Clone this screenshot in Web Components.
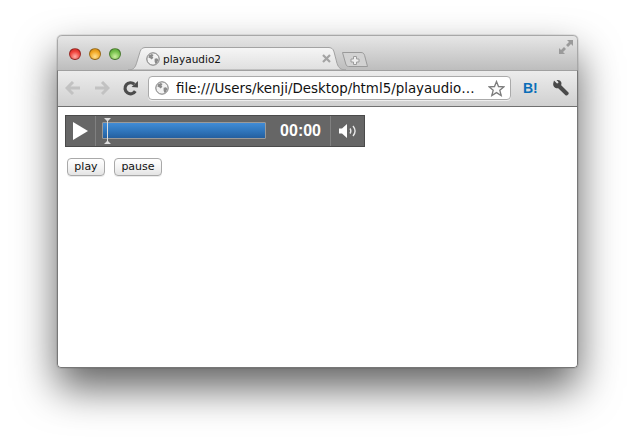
<!DOCTYPE html>
<html>
<head>
<meta charset="utf-8">
<title>playaudio2</title>
<style>
  html { background: #fff; }
  body { margin: 0; padding: 35px 57px 0; width: 635px; height: 447px; box-sizing: border-box; overflow: hidden; font-family: "DejaVu Sans", sans-serif; }
</style>
</head>
<body>
<browser-window>
  <tab-strip slot="tabs">
    <browser-tab>playaudio2</browser-tab>
  </tab-strip>
  <nav-toolbar slot="toolbar" url="file:///Users/kenji/Desktop/html5/playaudio…"></nav-toolbar>
  <audio-bar time="00:00"></audio-bar>
  <div style="display:flex;gap:9px;padding:11px 0 0 2px">
    <mac-button style="width:38px">play</mac-button>
    <mac-button style="width:48px">pause</mac-button>
  </div>
</browser-window>

<script>
const GLOBE = `
  <svg width="14" height="14" viewBox="0 0 14 14">
    <circle cx="7" cy="7" r="6.2" fill="#f2f2f2" stroke="#777" stroke-width="1"/>
    <path d="M3 3.2 5.8 2 7.6 3 6.400 4.600 7.400 5.800 5.600 7.600 4.600 6.600 2.400 5.600ZM8.600 6.800 11 6.200 12.400 7.800 11 11 9.400 12 8.600 9.600Z" fill="#8a8a8a"/>
  </svg>`;

class BrowserWindow extends HTMLElement {
  constructor() {
    super();
    const shadowRoot = this.attachShadow({ mode: "open" });
    shadowRoot.innerHTML = `
      <style>
        :host {
          display: block;
          width: 521px;
          height: 333px;
          border-radius: 5px 5px 4px 4px;
          box-shadow: 0 20px 40px rgba(0, 0, 0, 0.62), 0 0 1px rgba(0, 0, 0, 0.7);
          background: #fff;
        }
        .frame {
          height: 100%;
          border-radius: 5px 5px 4px 4px;
          overflow: hidden;
          display: flex;
          flex-direction: column;
        }
        .content {
          flex: 1;
          padding: 8px 7px;
          border: solid #777;
          border-width: 0 1px 1px;
          border-radius: 0 0 4px 4px;
          box-sizing: border-box;
          min-height: 0;
        }
      </style>
      <div class="frame">
        <slot name="tabs"></slot>
        <slot name="toolbar"></slot>
        <div class="content"><slot></slot></div>
      </div>
    `;
  }
}

class TabStrip extends HTMLElement {
  constructor() {
    super();
    const shadowRoot = this.attachShadow({ mode: "open" });
    shadowRoot.innerHTML = `
      <style>
        :host {
          display: flex;
          align-items: flex-end;
          height: 35px;
          box-sizing: border-box;
          background: linear-gradient(#e6e6e6, #bdbdbd);
          border: 1px solid #a8a8a8;
          border-bottom: 0;
          border-radius: 5px 5px 0 0;
          position: relative;
        }
        .lights {
          display: flex;
          gap: 8px;
          align-self: flex-start;
          padding: 12px 0 0 11px;
          width: 59px;
          flex: none;
        }
        .light {
          width: 12px;
          height: 12px;
          border-radius: 50%;
          box-sizing: border-box;
          border: 1px solid rgba(0, 0, 0, 0.35);
        }
        .red { background: radial-gradient(circle at 50% 75%, #ffb0a8, #f0443c 55%, #c0201c); }
        .amber { background: radial-gradient(circle at 50% 75%, #ffe090, #f2a825 55%, #c47f10); }
        .green { background: radial-gradient(circle at 50% 75%, #cdf0a0, #78c24e 55%, #4c9630); }
        .new-tab {
          width: 26px;
          height: 15px;
          margin: 0 0 3px -4px;
          flex: none;
        }
        .expand {
          position: absolute;
          right: 3px;
          top: 3px;
        }
      </style>
      <div class="lights">
        <div class="light red"></div>
        <div class="light amber"></div>
        <div class="light green"></div>
      </div>
      <slot></slot>
      <svg class="new-tab" viewBox="0 0 26 15">
        <path d="M.5.5H19C21 .5 22 1.500 22.600 3.400L25.500 14.500H6.600C5 14.500 4.400 13.600 3.800 12Z" fill="#d2d2d2" stroke="#9a9a9a"/>
        <path d="M11.500 4.500h3v2.500h2.500v3h-2.500v2.500h-3v-2.500h-2.500v-3h2.500Z" fill="#eee" stroke="#9c9c9c"/>
      </svg>
      <svg class="expand" width="16" height="16" viewBox="0 0 16 16">
        <path d="M9 1h6v6l-2-2-3 3-2-2 3-3ZM1 9l2 2 3-3 2 2-3 3 2 2H1Z" fill="#9a9a9a"/>
      </svg>
    `;
  }
}

class BrowserTab extends HTMLElement {
  constructor() {
    super();
    const shadowRoot = this.attachShadow({ mode: "open" });
    shadowRoot.innerHTML = `
      <style>
        :host {
          display: flex;
          align-items: center;
          position: relative;
          width: 218px;
          height: 23px;
          box-sizing: border-box;
          padding: 0 15px 0 18px;
          font-size: 10.5px;
          color: #111;
          flex: none;
        }
        .shape {
          position: absolute;
          inset: 0;
          width: 100%;
          height: 100%;
        }
        svg, span { position: relative; }
        .label { margin-left: 3px; flex: 1; }
        .close { color: #a4a4a4; }
      </style>
      <svg class="shape" viewBox="0 0 218 24" preserveAspectRatio="none">
        <defs>
          <linearGradient id="tab" x1="0" y1="0" x2="0" y2="1">
            <stop offset="0" stop-color="#f6f6f6"/>
            <stop offset="1" stop-color="#dfdfdf"/>
          </linearGradient>
        </defs>
        <path d="M0 24C5 24 7 22 8.500 17L12 5C13 1.500 15 .5 18 .5H200C203 .5 205 1.500 206 5L209 17C210.500 22 213 24 218 24Z" fill="url(#tab)" stroke="#a0a0a0"/>
      </svg>
      ${GLOBE}
      <span class="label"><slot></slot></span>
      <svg class="close" width="9" height="9" viewBox="0 0 9 9">
        <path d="M1 1 8 8M8 1 1 8" stroke="currentColor" stroke-width="2.200"/>
      </svg>
    `;
  }
}

class NavToolbar extends HTMLElement {
  constructor() {
    super();
    const shadowRoot = this.attachShadow({ mode: "open" });
    shadowRoot.innerHTML = `
      <style>
        :host {
          display: flex;
          align-items: center;
          height: 37px;
          box-sizing: border-box;
          padding: 0 0 1px 7px;
          background: linear-gradient(#ececec, #d0d0d0);
          border: solid #777;
          border-width: 0 1px;
          border-top: 1px solid #a0a0a0;
          border-bottom: 1px solid #707070;
        }
        .nav { display: flex; align-items: center; gap: 13px; width: 83px; flex: none; }
        .omnibox {
          display: flex;
          align-items: center;
          width: 363px;
          height: 24px;
          box-sizing: border-box;
          flex: none;
          background: #fff;
          border: 1px solid #aaa;
          border-radius: 4px;
          padding: 0 5px 0 6px;
          box-shadow: 0 1px 0 rgba(255, 255, 255, 0.6);
        }
        .url { flex: 1; margin-left: 7px; font-size: 13.400px; color: #111; white-space: nowrap; overflow: hidden; }
        .bookmark {
          margin-left: 12px;
          font: bold 14px "Liberation Sans", sans-serif;
          color: #0a6eb8;
          width: 29px;
        }
      </style>
      <div class="nav">
        <svg width="16" height="14" viewBox="0 0 16 14"><path d="M8 1 2 7l6 6M2.500 7H15" fill="none" stroke="#c2c2c2" stroke-width="3"/></svg>
        <svg width="16" height="14" viewBox="0 0 16 14"><path d="M8 1l6 6-6 6M13.500 7H1" fill="none" stroke="#c2c2c2" stroke-width="3"/></svg>
        <svg style="margin-left:-1px" width="17" height="17" viewBox="0 0 16 16"><path d="M12.500 10.500A5.200 5.200 0 1 1 11.600 4" fill="none" stroke="#4c4c4c" stroke-width="3"/><path d="M9 6.500 15 7V1Z" fill="#4c4c4c"/></svg>
      </div>
      <div class="omnibox">
        ${GLOBE}
        <span class="url"></span>
        <svg width="17" height="17" viewBox="0 0 17 17"><path d="M8.500 1.500 10.500 6.500 16 6.800 11.800 10.200 13.200 15.500 8.500 12.600 3.800 15.500 5.200 10.200 1 6.800 6.500 6.500Z" fill="#fafafa" stroke="#7c7c7c" stroke-width="1.300"/></svg>
      </div>
      <span class="bookmark">B!</span>
      <svg width="18" height="18" viewBox="0 0 18 18"><path d="M2 1.500 5 4.500 6.500 4 6 2.500 4.500 1C7 .5 9 1.500 9.500 4L9.200 6.200 16.500 13.500C17.500 14.700 15 17.500 13.500 16.300L6.200 9.200C3.500 9.800.8 7.500 1.200 4.500Z" fill="#4a4a4a"/></svg>
    `;
    shadowRoot.querySelector(".url").textContent = this.getAttribute("url");
  }
}

class AudioBar extends HTMLElement {
  constructor() {
    super();
    const shadowRoot = this.attachShadow({ mode: "open" });
    shadowRoot.innerHTML = `
      <style>
        :host {
          display: flex;
          align-items: stretch;
          width: 300px;
          height: 32px;
          box-sizing: border-box;
          background: #666;
          border: 1px solid #4a4a4a;
        }
        .play {
          width: 30px;
          flex: none;
          display: flex;
          align-items: center;
          justify-content: center;
          border-right: 1px solid #808080;
          box-sizing: border-box;
        }
        .track {
          position: relative;
          flex: none;
          width: 164px;
          height: 17px;
          margin: 6px 0 0 6px;
          box-sizing: border-box;
          border: 1px solid #9a9a9a;
          border-radius: 1px;
          background: linear-gradient(#418cd6, #2f75bb 55%, #245f9f);
        }
        .thumb {
          position: absolute;
          left: 1px;
          top: -5px;
        }
        .time {
          flex: 1;
          font: bold 16px "Liberation Sans", sans-serif;
          color: #fff;
          text-align: right;
          line-height: 30px;
          padding-right: 9px;
        }
        .volume {
          width: 34px;
          flex: none;
          box-sizing: border-box;
          border-left: 1px solid #808080;
          display: flex;
          align-items: center;
          justify-content: center;
          padding-left: 2px;
        }
      </style>
      <div class="play">
        <svg width="16" height="18" viewBox="0 0 16 18"><path d="M0 0 15 9 0 18Z" fill="#fff"/></svg>
      </div>
      <div class="track">
        <svg class="thumb" width="7" height="26" viewBox="0 0 7 26"><path d="M0 0H7L4 3V23L7 26H0L3 23V3Z" fill="#dedede"/></svg>
      </div>
      <div class="time"></div>
      <div class="volume">
        <svg width="19" height="16" viewBox="0 0 19 16">
          <path d="M0 5.500H3L8 1V15L3 10.500H0Z" fill="#fff"/>
          <path d="M11 5.500C12 7 12 9 11 10.500M14 3C16.500 6 16.500 10 14 13" fill="none" stroke="#e8e8e8" stroke-width="1.400"/>
        </svg>
      </div>
    `;
    shadowRoot.querySelector(".time").textContent = this.getAttribute("time");
  }
}

class MacButton extends HTMLElement {
  constructor() {
    super();
    const shadowRoot = this.attachShadow({ mode: "open" });
    shadowRoot.innerHTML = `
      <style>
        :host {
          display: block;
          height: 18px;
          box-sizing: border-box;
          border: 1px solid #a9a9a9;
          border-radius: 4px;
          background: linear-gradient(#fff, #f4f4f4 50%, #e4e4e4);
          box-shadow: 0 1px 0 rgba(0, 0, 0, 0.08);
          font-size: 11px;
          line-height: 16px;
          text-align: center;
          color: #111;
        }
      </style>
      <slot></slot>
    `;
  }
}

customElements.define("browser-window", BrowserWindow);
customElements.define("tab-strip", TabStrip);
customElements.define("browser-tab", BrowserTab);
customElements.define("nav-toolbar", NavToolbar);
customElements.define("audio-bar", AudioBar);
customElements.define("mac-button", MacButton);
</script>
</body>
</html>
